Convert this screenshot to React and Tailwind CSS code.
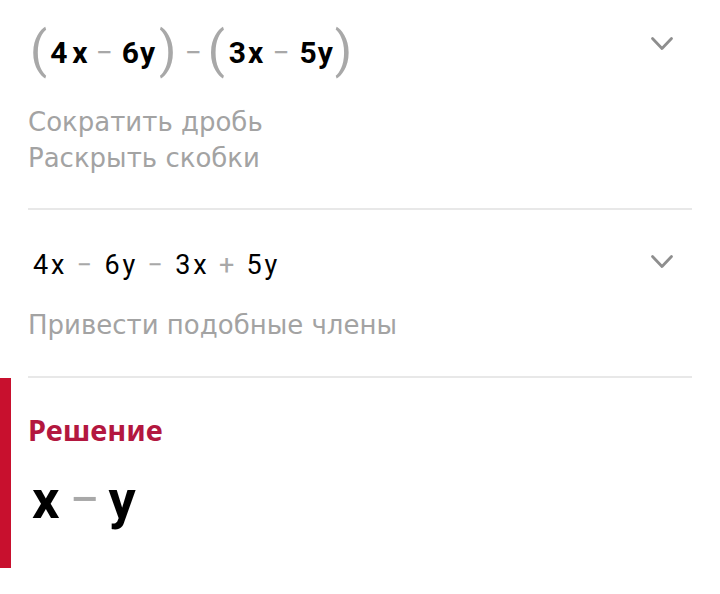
import React from 'react';

function Chevron({ className = '' }) {
  return (
    <svg width="24" height="16" viewBox="0 0 24 16" className={`shrink-0 ${className}`}>
      <path d="M2.5 2.5 L12 12.5 L21.5 2.5" fill="none" stroke="#8e8e8e" strokeWidth="2.8" strokeLinecap="round" strokeLinejoin="round" />
    </svg>
  );
}

const Op = ({ children, className = '' }) => (
  <span className={`text-[#a8a8a8] font-normal ${className}`}>{children}</span>
);

const Paren = ({ children, className = '' }) => (
  <span className={`text-[#a8a8a8] font-normal text-[50px] leading-none relative -top-[2px] ${className}`}>{children}</span>
);

export default function App() {
  const hint = "text-[#a3a3a3] text-[26px] leading-[36px] [font-family:'DejaVu_Sans',sans-serif]";
  return (
    <div className="w-[720px] h-[594px] bg-white [font-family:Roboto,sans-serif] overflow-hidden">
      <div className="pl-[28px] pr-[28px]">
        <div className="pt-[22px] pb-[32px] border-b-2 border-[#e8e8e8]">
          <div className="flex justify-between pr-[18px]">
            <div className="flex items-center text-[30px] font-bold text-black h-[60px]">
              <Paren className="ml-[2px]">(</Paren>
              <span className="ml-[3px]">4</span>
              <span className="ml-[5px]">x</span>
              <Op className="ml-[8px]">−</Op>
              <span className="ml-[9px]">6</span>
              <span className="ml-[1px]">y</span>
              <Paren className="ml-[4px]">)</Paren>
              <Op className="ml-[8px]">−</Op>
              <Paren className="ml-[6px]">(</Paren>
              <span className="ml-[4px]">3</span>
              <span className="ml-[2px]">x</span>
              <Op className="ml-[9px]">−</Op>
              <span className="ml-[10px]">5</span>
              <span className="ml-[1px]">y</span>
              <Paren className="ml-[2px]">)</Paren>
            </div>
            <Chevron className="mt-[14px]" />
          </div>
          <div className="mt-[22px]">
            <div className={hint}>Сократить дробь</div>
            <div className={hint}>Раскрыть скобки</div>
          </div>
        </div>

        <div className="pt-[37px] pb-[33px] border-b-2 border-[#e8e8e8]">
          <div className="flex justify-between pr-[18px]">
            <div className="text-[27px] text-black leading-[36px] pl-[5px] tracking-[2.8px]">
              4x <Op>−</Op> 6y <Op>−</Op> 3x <Op>+</Op> 5y
            </div>
            <Chevron className="mt-[7px]" />
          </div>
          <div className={`${hint} mt-[24px]`}>Привести подобные члены</div>
        </div>
      </div>

      <div className="flex">
        <div className="w-[11px] h-[190px] bg-[#c8102e]" />
        <div className="pl-[17px] pt-[32px]">
          <div className="text-[29px] font-bold text-[#b3173f] leading-[40px] [font-family:'Noto_Sans',sans-serif]">Решение</div>
          <div className="mt-[22px] text-[54px] font-bold leading-[56px] text-black pl-[4px] flex">
            <span>x</span>
            <Op className="ml-[10px]">−</Op>
            <span className="ml-[8px]">y</span>
          </div>
        </div>
      </div>
    </div>
  );
}
